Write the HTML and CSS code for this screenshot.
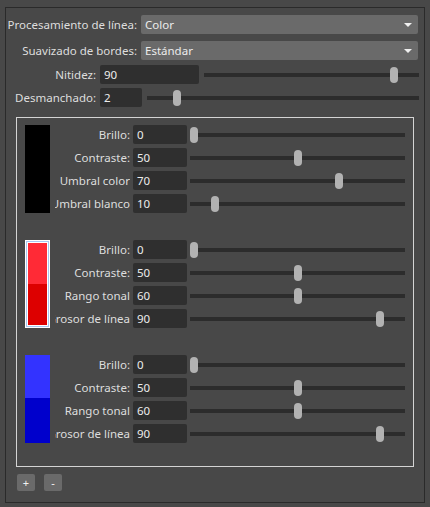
FILE: index.html
```html
<!DOCTYPE html>
<html>
<head>
<meta charset="utf-8">
<link rel="stylesheet" href="styles.css">
</head>
<body>
<div class="panel">
  <div class="row r1">
    <span class="lbl w131">Procesamiento de línea:</span>
    <div class="combo"><span>Color</span><i class="arrow"></i></div>
  </div>
  <div class="row r2">
    <span class="lbl w131">Suavizado de bordes:</span>
    <div class="combo"><span>Estándar</span><i class="arrow"></i></div>
  </div>
  <div class="row r3">
    <span class="lbl w90">Nitidez:</span>
    <div class="field f99">90</div>
    <div class="slider s215"><i class="thumb" style="--v:0.9"></i></div>
  </div>
  <div class="row r4">
    <span class="lbl w90">Desmanchado:</span>
    <div class="field f42">2</div>
    <div class="slider s272"><i class="thumb" style="--v:0.1"></i></div>
  </div>

  <div class="box">
    <div class="group">
      <div class="swatch black"></div>
      <div class="params">
        <div class="prow"><div class="plbl"><span>Brillo:</span></div><div class="field f54">0</div><div class="slider s215"><i class="thumb" style="--v:0"></i></div></div>
        <div class="prow"><div class="plbl"><span>Contraste:</span></div><div class="field f54">50</div><div class="slider s215"><i class="thumb" style="--v:0.5"></i></div></div>
        <div class="prow"><div class="plbl"><span>Umbral color</span></div><div class="field f54">70</div><div class="slider s215"><i class="thumb" style="--v:0.7"></i></div></div>
        <div class="prow"><div class="plbl"><span>Umbral blanco</span></div><div class="field f54">10</div><div class="slider s215"><i class="thumb" style="--v:0.1"></i></div></div>
      </div>
    </div>
    <div class="group">
      <div class="swatch red selected"></div>
      <div class="params">
        <div class="prow"><div class="plbl"><span>Brillo:</span></div><div class="field f54">0</div><div class="slider s215"><i class="thumb" style="--v:0"></i></div></div>
        <div class="prow"><div class="plbl"><span>Contraste:</span></div><div class="field f54">50</div><div class="slider s215"><i class="thumb" style="--v:0.5"></i></div></div>
        <div class="prow"><div class="plbl"><span>Rango tonal</span></div><div class="field f54">60</div><div class="slider s215"><i class="thumb" style="--v:0.5"></i></div></div>
        <div class="prow"><div class="plbl"><span>Grosor de línea</span></div><div class="field f54">90</div><div class="slider s215"><i class="thumb" style="--v:0.9"></i></div></div>
      </div>
    </div>
    <div class="group">
      <div class="swatch blue"></div>
      <div class="params">
        <div class="prow"><div class="plbl"><span>Brillo:</span></div><div class="field f54">0</div><div class="slider s215"><i class="thumb" style="--v:0"></i></div></div>
        <div class="prow"><div class="plbl"><span>Contraste:</span></div><div class="field f54">50</div><div class="slider s215"><i class="thumb" style="--v:0.5"></i></div></div>
        <div class="prow"><div class="plbl"><span>Rango tonal</span></div><div class="field f54">60</div><div class="slider s215"><i class="thumb" style="--v:0.5"></i></div></div>
        <div class="prow"><div class="plbl"><span>Grosor de línea</span></div><div class="field f54">90</div><div class="slider s215"><i class="thumb" style="--v:0.9"></i></div></div>
      </div>
    </div>
  </div>

  <div class="buttons">
    <button class="btn">+</button>
    <button class="btn">-</button>
  </div>
</div>
</body>
</html>
```

FILE: styles.css
```css
* { box-sizing: border-box; }
html, body { margin: 0; padding: 0; }
body {
  background: #484848;
  width: 430px;
  height: 507px;
  overflow: hidden;
  font-family: "Noto Sans", "DejaVu Sans", sans-serif;
  font-size: 11.5px;
  color: #dedede;
}
.panel {
  margin: 7px 5px 0 5px;
  width: 420px;
  height: 496px;
  border: 1px solid #2a2a2a;
  padding-top: 7px;
}
.row {
  display: flex;
  align-items: center;
  height: 19px;
}
.r2 { margin-top: 7px; }
.r3 { margin-top: 5px; }
.r4 { margin-top: 4px; }
.lbl {
  text-align: right;
  white-space: nowrap;
  flex: none;
  margin-right: 4px;
  line-height: 19px;
}
.w131 { width: 131px; }
.w90 { width: 90px; }
.combo {
  width: 277px;
  height: 19px;
  background: #6a6a6a;
  border-radius: 2px;
  display: flex;
  align-items: center;
  justify-content: space-between;
  padding: 0 5px 0 4px;
  color: #ececec;
}
.arrow {
  width: 0; height: 0;
  border-left: 4px solid transparent;
  border-right: 4px solid transparent;
  border-top: 4px solid #f0f0f0;
  margin-right: 1px;
}
.field {
  height: 19px;
  background: #2f2f2f;
  border-radius: 2px;
  padding-left: 4px;
  line-height: 19px;
  color: #ececec;
  flex: none;
}
.f99 { width: 99px; }
.f42 { width: 42px; }
.f54 { width: 54px; }
.slider {
  position: relative;
  height: 4px;
  background: #2c2c2c;
  flex: none;
  margin-left: 5px;
}
.s215 { width: 215px; }
.s272 { width: 272px; }
.thumb {
  position: absolute;
  top: -6px;
  left: calc(var(--v, 0) * (100% - 8px));
  width: 8px;
  height: 16px;
  border-radius: 4px;
  background: #b2b2b2;
}

.box {
  margin: 10px 0 0 10px;
  width: 398px;
  height: 350px;
  border: 1px solid #d4d4d4;
  padding: 7px 8px 0 8px;
  display: flex;
  flex-direction: column;
  gap: 27px;
}
.group {
  display: flex;
  align-items: stretch;
}
.swatch {
  width: 25px;
  flex: none;
  margin-right: 5px;
}
.black { background: #000; }
.red { background: linear-gradient(#ff2a36 0 50%, #dd0000 50% 100%); }
.blue { background: linear-gradient(#3333ff 0 49%, #0000cc 49% 100%); }
.selected {
  border: 1px solid #ffffff;
  box-shadow: inset 0 0 0 1px #a9c8f2, inset 0 0 0 2px #ffffff;
}
.params {
  display: flex;
  flex-direction: column;
  gap: 4px;
}
.prow {
  display: flex;
  align-items: center;
  height: 19px;
}
.plbl {
  width: 75px;
  flex: none;
  overflow: hidden;
  display: flex;
  justify-content: flex-end;
  margin-right: 3px;
  line-height: 19px;
}
.plbl span {
  flex: none;
  white-space: nowrap;
}
.prow .slider { margin-left: 3px; }

.buttons {
  display: flex;
  gap: 9px;
  margin: 7px 0 0 11px;
}
.btn {
  width: 18px;
  height: 17px;
  padding: 0;
  border: none;
  border-radius: 2px;
  background: #6a6a6a;
  color: #f2f2f2;
  font-family: "Noto Sans", "DejaVu Sans", sans-serif;
  font-size: 11px;
  line-height: 17px;
}
```
